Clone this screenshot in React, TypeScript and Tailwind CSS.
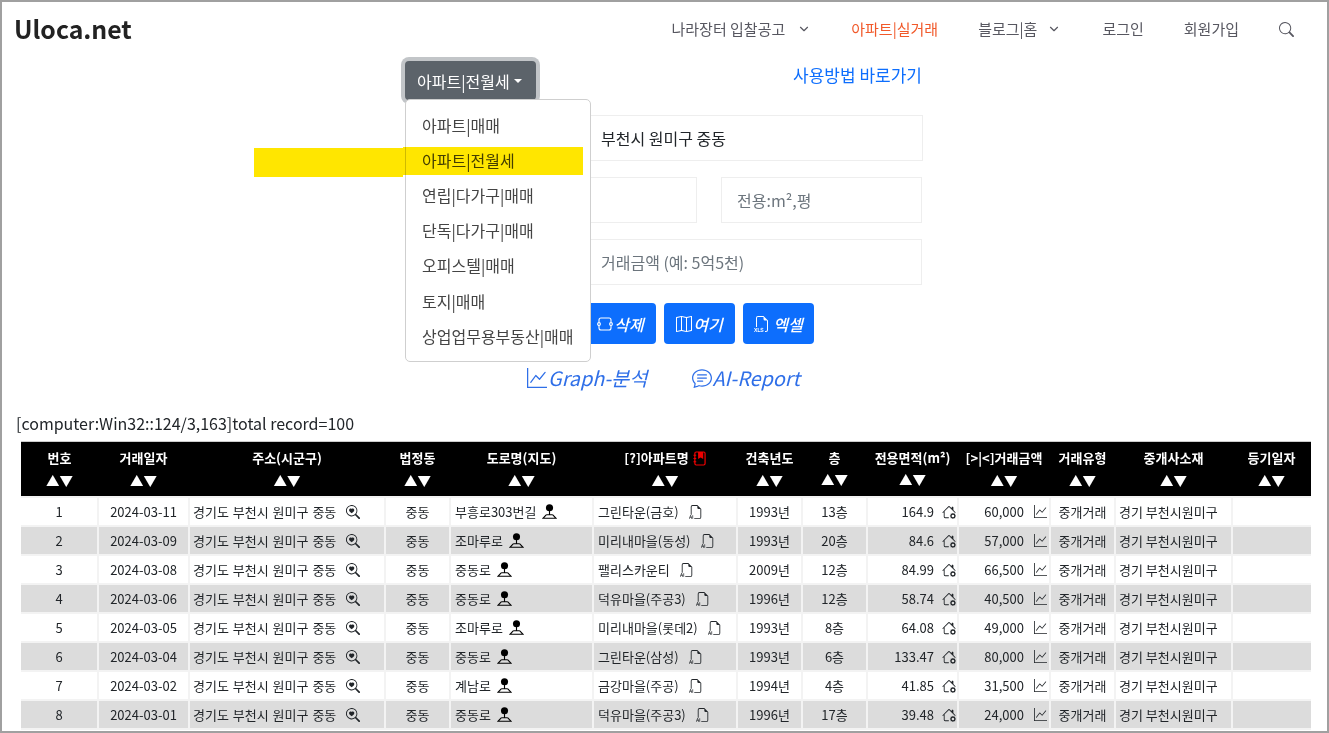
import { ChevronDown } from 'lucide-react';
import {
    BsChatText,
    BsFiletypeAi,
    BsFiletypeXls,
    BsGraphUp,
    BsHouseGear,
    BsMap,
    BsSearch,
    BsSearchHeart,
} from 'react-icons/bs';

const menuItems = [
    '아파트|매매',
    '아파트|전월세',
    '연립|다가구|매매',
    '단독|다가구|매매',
    '오피스텔|매매',
    '토지|매매',
    '상업업무용부동산|매매',
];

const columns = [
    { label: '번호', width: 'w-[77px]' },
    { label: '거래일자', width: 'w-[91px]' },
    { label: '주소(시군구)', width: 'w-[196px]' },
    { label: '법정동', width: 'w-[65px]' },
    { label: '도로명(지도)', width: 'w-[143px]' },
    { label: '[?]아파트명', width: 'w-[144px]', book: true },
    { label: '건축년도', width: 'w-[65px]' },
    { label: '층', width: 'w-[65px]', raised: true },
    { label: '전용면적(m²)', width: 'w-[91px]', raised: true },
    { label: '[>|<]거래금액', width: 'w-[92px]' },
    { label: '거래유형', width: 'w-[65px]' },
    { label: '중개사소재', width: 'w-[117px]' },
    { label: '등기일자', width: 'w-[79px]' },
];

const rows = [
    { no: 1, date: '2024-03-11', road: '부흥로303번길', apt: '그린타운(금호)', year: '1993년', floor: '13층', area: '164.9', price: '60,000' },
    { no: 2, date: '2024-03-09', road: '조마루로', apt: '미리내마을(동성)', year: '1993년', floor: '20층', area: '84.6', price: '57,000' },
    { no: 3, date: '2024-03-08', road: '중동로', apt: '팰리스카운티', year: '2009년', floor: '12층', area: '84.99', price: '66,500' },
    { no: 4, date: '2024-03-06', road: '중동로', apt: '덕유마을(주공3)', year: '1996년', floor: '12층', area: '58.74', price: '40,500' },
    { no: 5, date: '2024-03-05', road: '조마루로', apt: '미리내마을(롯데2)', year: '1993년', floor: '8층', area: '64.08', price: '49,000' },
    { no: 6, date: '2024-03-04', road: '중동로', apt: '그린타운(삼성)', year: '1993년', floor: '6층', area: '133.47', price: '80,000' },
    { no: 7, date: '2024-03-02', road: '계남로', apt: '금강마을(주공)', year: '1994년', floor: '4층', area: '41.85', price: '31,500' },
    { no: 8, date: '2024-03-01', road: '중동로', apt: '덕유마을(주공3)', year: '1996년', floor: '17층', area: '39.48', price: '24,000' },
];

const PersonPin = () => (
    <svg viewBox="0 0 16 16" className="w-[15px] h-[15px] shrink-0 ml-1.5 text-black" fill="none" stroke="currentColor">
        <circle cx="8" cy="4" r="3.8" fill="currentColor" stroke="none" />
        <path d="M8 7v4.5M4.5 11.5h7M4.5 11.5L1 15.2h14l-3.5-3.7" strokeWidth="1.2" />
    </svg>
);

const NodeBox = () => (
    <svg viewBox="0 0 16 16" className="w-4 h-4 shrink-0" fill="none" stroke="currentColor" strokeWidth="1.1">
        <rect x="2" y="2" width="12" height="12" rx="2" />
        <circle cx="2" cy="8" r="1.4" fill="#0d6efd" />
        <circle cx="14" cy="8" r="1.4" fill="#0d6efd" />
    </svg>
);

const RedBook = () => (
    <svg viewBox="0 0 14 16" className="w-[13px] h-[15px] shrink-0 text-[#f00000]" fill="none" stroke="currentColor" strokeWidth="1.3">
        <rect x="2" y="1" width="11" height="14" rx="1.5" />
        <path d="M0.5 4.5h3M0.5 8h3M0.5 11.5h3" strokeWidth="1.1" />
        <path d="M5.5 1h5.5v7.5L8.2 6.8 5.5 8.5z" fill="currentColor" stroke="none" />
    </svg>
);

const cellLine = 'border-2 border-[#f3f3f3] first:border-l-0 last:border-r-0 h-[29px] text-[13px] leading-none p-0';

export default function App() {
    return (
        <div
            className="relative w-[1329px] h-[733px] overflow-hidden border-2 border-[#a0a0a0] bg-white text-[#212529]"
            style={{ fontFamily: '"Noto Sans CJK KR", "Noto Sans", sans-serif' }}
        >
            <header className="flex items-center h-[54px] pl-3 pr-[33px]">
                <a className="text-[24.8px] font-bold text-[#222222]">Uloca.net</a>
                <nav className="flex items-center gap-10 ml-auto text-[15px] text-[#575760]">
                    <span className="flex items-center gap-3">
                        나라장터 입찰공고
                        <ChevronDown size={14} />
                    </span>
                    <span className="text-[#f1592a]">아파트|실거래</span>
                    <span className="flex items-center gap-2.5">
                        블로그|홈
                        <ChevronDown size={14} />
                    </span>
                    <span className="ml-px">로그인</span>
                    <span>회원가입</span>
                    <BsSearch size={15} />
                </nav>
            </header>

            <div className="w-[519px] mx-auto">
                <div className="relative flex justify-between items-start h-[59px] pt-[5px] pr-0.5">
                    <button className="flex items-center h-[39px] w-[131px] pl-3 rounded bg-[#5c636a] text-white ring-4 ring-[#c2c5c8]">
                        아파트|전월세
                        <span className="ml-1 border-x-[4.5px] border-x-transparent border-t-[4px] border-t-white" />
                    </button>
                    <a className="mt-0.5 text-[17px] leading-6 text-[#0d6efd]">사용방법 바로가기</a>
                    <ul className="absolute z-10 left-0 top-[43px] w-[186px] pt-[7px] pb-2 bg-white border border-[#cfcfcf] rounded-[5px] text-[#444444]">
                        {menuItems.map((item) => (
                            <li key={item} className="h-[35.2px] px-4 flex items-center whitespace-nowrap">
                                {item}
                            </li>
                        ))}
                    </ul>
                </div>

                <div className="flex flex-col gap-4 pl-[180px]">
                    <input
                        readOnly
                        defaultValue="부천시 원미구 중동"
                        className="h-[46px] w-[338px] px-[15px] border border-[#eeeeee] outline-none"
                    />
                    <div className="flex gap-6">
                        <input className="h-[46px] w-[112px] px-[15px] border border-[#eeeeee] outline-none" />
                        <input
                            placeholder="전용:m²,평"
                            className="h-[46px] w-[201px] px-[15px] border border-[#eeeeee] outline-none placeholder:text-[#6c757d]"
                        />
                    </div>
                    <input
                        placeholder="거래금액 (예: 5억5천)"
                        className="h-[46px] w-[337px] px-[15px] border border-[#eeeeee] outline-none placeholder:text-[#6c757d]"
                    />
                </div>

                <div className="flex gap-2 mt-[18px] pl-[180px] text-white italic font-medium">
                    <button className="flex items-center justify-center gap-px w-[71px] h-[41px] rounded bg-[#0d6efd]">
                        <NodeBox />
                        삭제
                    </button>
                    <button className="flex items-center justify-center gap-px w-[71px] h-[41px] rounded bg-[#0d6efd]">
                        <BsMap size={16} />
                        여기
                    </button>
                    <button className="flex items-center justify-center gap-[3px] w-[71px] h-[41px] rounded bg-[#0d6efd]">
                        <BsFiletypeXls size={16} />
                        엑셀
                    </button>
                </div>
            </div>

            <div className="flex justify-center gap-11 mt-5 pr-0.5 text-[19.8px] leading-7 italic text-[#2f6fe8]">
                <a className="flex items-center gap-px">
                    <BsGraphUp size={20} />
                    Graph-분석
                </a>
                <a className="flex items-center gap-px">
                    <BsChatText size={20} />
                    AI-Report
                </a>
            </div>

            <p className="mt-[19px] pl-3.5 leading-6">[computer:Win32::124/3,163]total record=100</p>

            <div className="mt-1.5 ml-[19px] border-t border-[#cccccc] w-[1290px]">
                <table className="table-fixed w-[1290px] border-collapse">
                    <thead>
                        <tr className="bg-black text-white text-[13px] font-bold h-[55px]">
                            {columns.map((col) => (
                                <th key={col.label} className={`${col.width} p-0 align-top font-bold`}>
                                    <div className="flex items-center justify-center gap-1 mt-[6px] h-5 whitespace-nowrap">
                                        {col.label}
                                        {col.book && <RedBook />}
                                    </div>
                                    <div className={col.raised ? 'mt-px text-[13.5px] leading-5' : 'mt-0.5 text-[13.5px] leading-5'}>▲▼</div>
                                </th>
                            ))}
                        </tr>
                    </thead>
                    <tbody>
                        {rows.map((row) => (
                            <tr key={row.no} className={row.no % 2 === 0 ? 'bg-[#dcdcdc]' : 'bg-white'}>
                                <td className={`${cellLine} text-center`}>{row.no}</td>
                                <td className={`${cellLine} text-center`}>{row.date}</td>
                                <td className={cellLine}>
                                    <span className="flex items-center pl-[3px] whitespace-nowrap [word-spacing:1px]">
                                        경기도 부천시 원미구 중동
                                        <BsSearchHeart size={14} className="ml-2.5" />
                                    </span>
                                </td>
                                <td className={`${cellLine} text-center`}>중동</td>
                                <td className={cellLine}>
                                    <span className="flex items-center pl-1 whitespace-nowrap">
                                        {row.road}
                                        <PersonPin />
                                    </span>
                                </td>
                                <td className={cellLine}>
                                    <span className="flex items-center pl-1 whitespace-nowrap">
                                        {row.apt}
                                        <BsFiletypeAi size={14} className="ml-2.5" />
                                    </span>
                                </td>
                                <td className={`${cellLine} text-center`}>{row.year}</td>
                                <td className={`${cellLine} text-center`}>{row.floor}</td>
                                <td className={cellLine}>
                                    <span className="flex items-center justify-end gap-2 pr-px">
                                        {row.area}
                                        <BsHouseGear size={14} />
                                    </span>
                                </td>
                                <td className={cellLine}>
                                    <span className="flex items-center justify-end gap-2.5 pr-0.5">
                                        {row.price}
                                        <BsGraphUp size={13} />
                                    </span>
                                </td>
                                <td className={`${cellLine} text-center`}>중개거래</td>
                                <td className={`${cellLine} pl-[3px] whitespace-nowrap`}>경기 부천시원미구</td>
                                <td className={cellLine} />
                            </tr>
                        ))}
                    </tbody>
                </table>
            </div>

            {/* marker strokes drawn over the open menu */}
            <div className="absolute z-20 left-[252px] top-[146px] w-[149px] h-[29px] bg-[#ffe600] mix-blend-multiply" />
            <div className="absolute z-20 left-[401px] top-[145px] w-[180px] h-[28px] bg-[#ffe600] mix-blend-multiply" />
        </div>
    );
}
